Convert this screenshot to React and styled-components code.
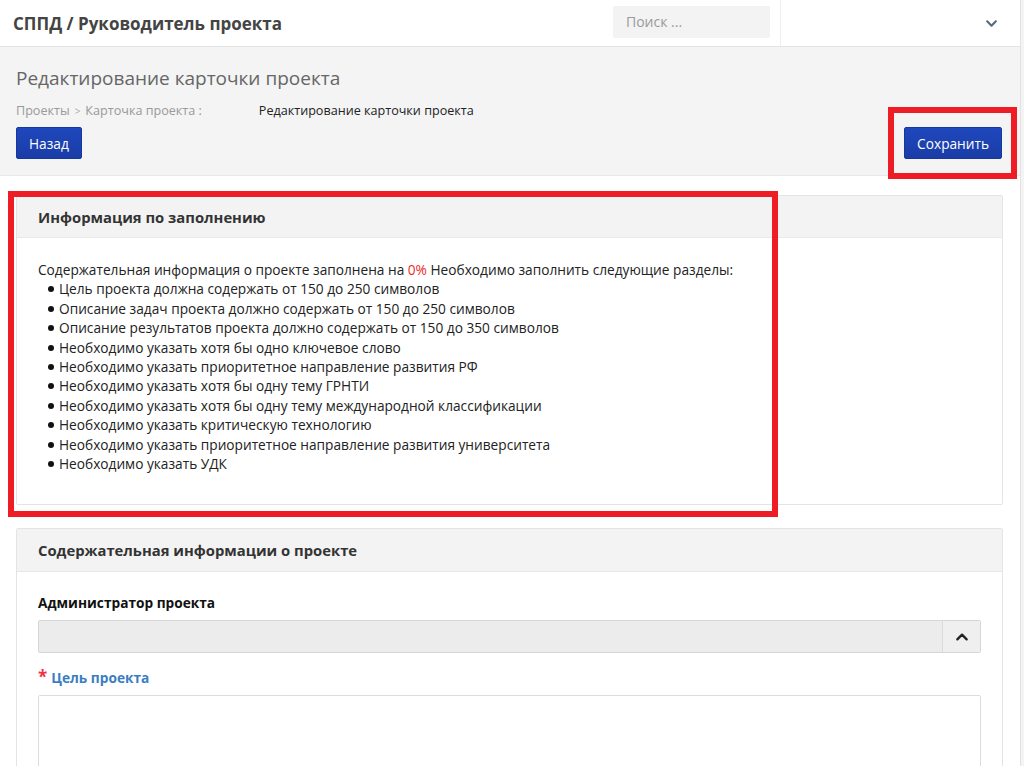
import React from "react";
import styled, { createGlobalStyle } from "styled-components";

const GlobalStyle = createGlobalStyle`
  html, body {
    margin: 0;
    padding: 0;
    background: #fff;
    font-family: "Open Sans", "Noto Sans", sans-serif;
    color: #333;
  }
  * { box-sizing: border-box; }
`;

const Shell = styled.div`
  position: relative;
  display: flex;
  min-height: 766px;
`;

const Main = styled.div`
  flex: 1;
  min-width: 0;
`;

const ScrollTrack = styled.div`
  width: 4px;
  background: #f4f4f4;
  border-left: 1px solid #e2e2e2;
`;

const TopBar = styled.header`
  height: 47px;
  display: flex;
  align-items: center;
  background: #fff;
  border-bottom: 1px solid #e4e4e4;
  box-shadow: 0 1px 2px rgba(0, 0, 0, 0.04);
`;

const Brand = styled.div`
  padding-left: 13px;
  font-size: 17px;
  font-weight: 700;
  color: #444;
  flex: 1;
`;

const Search = styled.div`
  width: 157px;
  height: 32px;
  margin-right: 10px;
  margin-top: -3px;
  background: #f3f3f3;
  border-radius: 2px;
  padding-left: 13px;
  display: flex;
  align-items: center;
  font-size: 14px;
  color: #9a9a9a;
`;

const UserArea = styled.div`
  width: 240px;
  height: 46px;
  border-left: 1px solid #efefef;
  display: flex;
  align-items: center;
  justify-content: flex-end;
  padding-right: 22px;
  color: #5b6a80;
`;

const PageHead = styled.section`
  background: #f4f4f4;
  border-bottom: 1px solid #e8e8e8;
  padding: 17px 18px 16px 16px;
`;

const PageTitle = styled.h1`
  margin: 0;
  font-size: 19px;
  line-height: 28px;
  font-weight: 400;
  color: #666;
`;

const Crumbs = styled.div`
  margin-top: 10px;
  display: flex;
  align-items: center;
  font-size: 12.6px;
  line-height: 18px;
  color: #999;
`;

const CrumbSep = styled.span`
  margin: 0 5px;
  font-size: 10px;
  color: #aaa;
`;

const CrumbCurrent = styled.span`
  color: #222;
  margin-left: ${(p) => p.$gap}px;
`;

const ButtonRow = styled.div`
  margin-top: 7px;
  display: flex;
  justify-content: space-between;
`;

const Button = styled.button`
  height: 32px;
  padding: 0 ${(p) => p.$pad}px;
  border: 1px solid #1737a0;
  border-radius: 2px;
  background: linear-gradient(#1f48bd, #1a3ca6);
  color: #fff;
  font-family: inherit;
  font-size: 13.7px;
`;

const Content = styled.div`
  padding: 19px 17px 0 16px;
  display: flex;
  flex-direction: column;
  gap: 23px;
`;

const Panel = styled.div`
  border: 1px solid #e4e4e4;
  border-radius: 2px;
  background: #fff;
`;

const PanelHead = styled.div`
  height: ${(p) => p.$h || 42}px;
  display: flex;
  align-items: center;
  padding: 0 21px;
  background: #f3f3f3;
  border-bottom: 1px solid #e8e8e8;
  font-size: 14.8px;
  font-weight: 700;
  color: #333;
`;

const PanelBody = styled.div`
  padding: ${(p) => p.$pad};
  font-size: 13.7px;
  line-height: 19.4px;
  color: #222;
`;

const Percent = styled.span`
  color: #f02828;
`;

const List = styled.ul`
  margin: 0;
  padding-left: 21px;
  list-style: none;
`;

const Item = styled.li`
  position: relative;

  &::before {
    content: "";
    position: absolute;
    left: -11px;
    top: 7px;
    width: 6px;
    height: 6px;
    border-radius: 50%;
    background: #111;
  }
`;

const FieldLabel = styled.div`
  font-size: 13.7px;
  line-height: 20px;
  font-weight: 700;
  color: ${(p) => (p.$accent ? "#3b7dc4" : "#111")};
  margin-top: ${(p) => p.$top || 0}px;
`;

const Required = styled.span`
  color: #ee3344;
  margin-right: 4px;
  font-size: 17px;
`;

const Select = styled.div`
  margin-top: 7px;
  height: 33px;
  display: flex;
  background: #ececec;
  border: 1px solid #d6d6d6;
  border-radius: 2px;
`;

const SelectValue = styled.div`
  flex: 1;
`;

const SelectToggle = styled.div`
  width: 38px;
  border-left: 1px solid #dcdcdc;
  background: #efefef;
  display: flex;
  align-items: center;
  justify-content: center;
  color: #222;
`;

const TextArea = styled.div`
  margin-top: 7px;
  height: 110px;
  border: 1px solid #dcdcdc;
  border-radius: 2px;
  background: #fff;
`;

const Marker = styled.div`
  position: absolute;
  left: ${(p) => p.$x}px;
  top: ${(p) => p.$y}px;
  width: ${(p) => p.$w}px;
  height: ${(p) => p.$h}px;
  border: ${(p) => p.$b}px solid #ee1c25;
  pointer-events: none;
`;

const Chevron = ({ up, size = 12, width = 2 }) => (
  <svg width={size} height={size} viewBox="0 0 12 12" fill="none">
    <path
      d={up ? "M2 8 L6 4 L10 8" : "M2 4 L6 8 L10 4"}
      stroke="currentColor"
      strokeWidth={width}
      strokeLinecap="round"
      strokeLinejoin="round"
    />
  </svg>
);

const requirements = [
  "Цель проекта должна содержать от 150 до 250 символов",
  "Описание задач проекта должно содержать от 150 до 250 символов",
  "Описание результатов проекта должно содержать от 150 до 350 символов",
  "Необходимо указать хотя бы одно ключевое слово",
  "Необходимо указать приоритетное направление развития РФ",
  "Необходимо указать хотя бы одну тему ГРНТИ",
  "Необходимо указать хотя бы одну тему международной классификации",
  "Необходимо указать критическую технологию",
  "Необходимо указать приоритетное направление развития университета",
  "Необходимо указать УДК",
];

export default function App() {
  return (
    <Shell>
      <GlobalStyle />
      <Main>
        <TopBar>
          <Brand>СППД / Руководитель проекта</Brand>
          <Search>Поиск ...</Search>
          <UserArea>
            <Chevron size={13} width={2} />
          </UserArea>
        </TopBar>

        <PageHead>
          <PageTitle>Редактирование карточки проекта</PageTitle>
          <Crumbs>
            <span>Проекты</span>
            <CrumbSep>&gt;</CrumbSep>
            <span>Карточка проекта :</span>
            <CrumbCurrent $gap={57}>Редактирование карточки проекта</CrumbCurrent>
          </Crumbs>
          <ButtonRow>
            <Button $pad={12}>Назад</Button>
            <Button $pad={12}>Сохранить</Button>
          </ButtonRow>
        </PageHead>

        <Content>
          <Panel>
            <PanelHead>Информация по заполнению</PanelHead>
            <PanelBody $pad="22px 21px 31px">
              Содержательная информация о проекте заполнена на <Percent>0%</Percent>{" "}
              Необходимо заполнить следующие разделы:
              <List>
                {requirements.map((r) => (
                  <Item key={r}>{r}</Item>
                ))}
              </List>
            </PanelBody>
          </Panel>

          <Panel>
            <PanelHead $h={43}>Содержательная информации о проекте</PanelHead>
            <PanelBody $pad="21px 21px 20px">
              <FieldLabel>Администратор проекта</FieldLabel>
              <Select>
                <SelectValue />
                <SelectToggle>
                  <Chevron up size={14} width={2} />
                </SelectToggle>
              </Select>
              <FieldLabel $accent $top={14}>
                <Required>*</Required>Цель проекта
              </FieldLabel>
              <TextArea />
            </PanelBody>
          </Panel>
        </Content>
      </Main>
      <ScrollTrack />

      <Marker $x={888} $y={107} $w={129} $h={72} $b={6} />
      <Marker $x={8} $y={191} $w={770} $h={326} $b={6} />
    </Shell>
  );
}
